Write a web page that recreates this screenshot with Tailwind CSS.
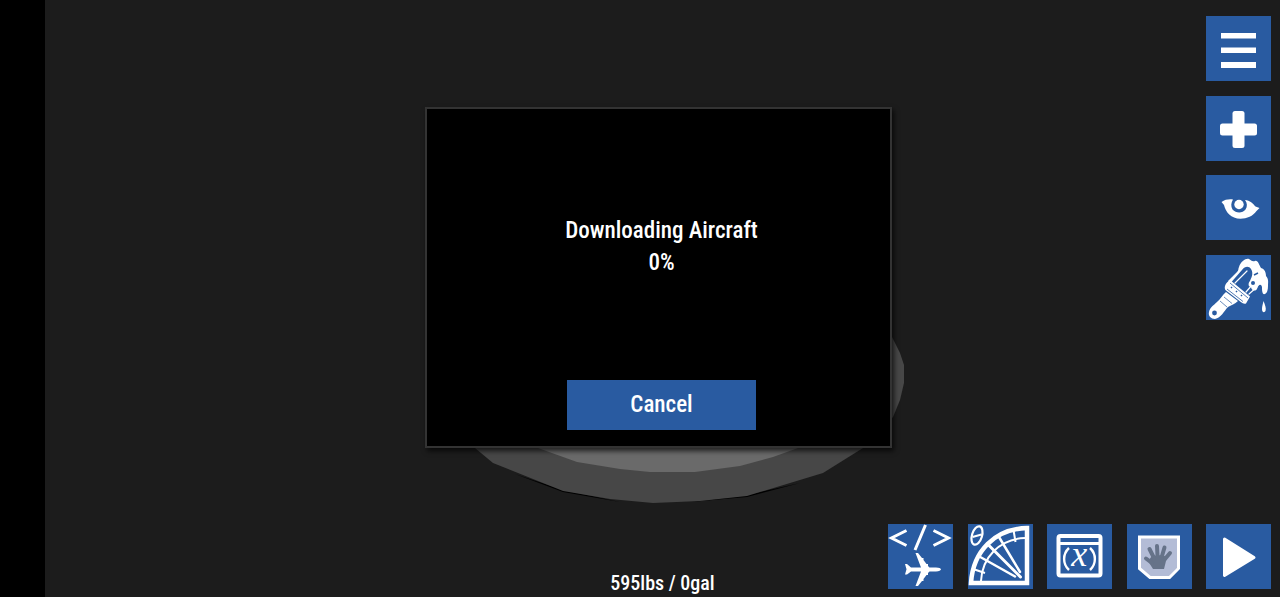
<!DOCTYPE html>
<html lang="en">
<head>
    <meta charset="UTF-8">
    <meta name="viewport" content="width=device-width, initial-scale=1.0">
    <title>Aircraft Designer</title>
    <script src="https://cdn.jsdelivr.net/npm/@tailwindcss/browser@4"></script>
</head>
<body class="flex bg-black min-h-screen overflow-hidden font-['Roboto_Condensed','Roboto',sans-serif] font-medium text-white">
    <main class="relative flex flex-col flex-1 justify-between bg-[#1c1c1c] ml-[45px] pt-4 pb-2">

        <!-- Platform under the aircraft -->
        <svg class="absolute inset-0 w-full h-full" viewBox="45 0 1235 597" preserveAspectRatio="xMidYMin slice" aria-hidden="true">
            <path d="M515 474L563 492L620 502L563 490ZM690 502L747 497L800 483L747 495Z" fill="#000"/>
            <path d="M475 448L493 463L563 491L610 499L653 503L700 501L747 496L823 473L863 448L893 417L900 400L904 383L904 365L900 353L892 337L660 250L475 400Z" fill="#474747"/>
            <path d="M538 448L577 462L620 469L650 472L695 472L740 466L773 457L798 448L798 400L538 400Z" fill="#6a6a6a"/>
        </svg>

        <nav class="relative flex flex-col justify-between self-end mr-[9px] h-[304px]" aria-label="Tools">
            <button type="button" aria-label="Menu" class="bg-[#295ba1] hover:bg-[#3269b5] size-[65px]">
                <svg viewBox="0 0 65 65" fill="#fff">
                    <path d="M15 17h35v5.500H15zM15 31.500h35v5.500H15zM15 46h35v6H15z"/>
                </svg>
            </button>
            <button type="button" aria-label="Add part" class="bg-[#295ba1] hover:bg-[#3269b5] size-[65px]">
                <svg viewBox="0 0 65 65" fill="#fff">
                    <rect x="26.5" y="15" width="12" height="37" rx="2.5"/>
                    <rect x="14" y="27.5" width="37" height="12" rx="2.5"/>
                </svg>
            </button>
            <button type="button" aria-label="View" class="bg-[#295ba1] hover:bg-[#3269b5] size-[65px]">
                <svg viewBox="0 0 65 65" fill="#fff">
                    <path d="M15.500 27C19 24.500 23 24 27 24.500C25 27.500 24.700 31.500 26.500 34.500C30 38.500 36.500 38.500 39.500 34.500C41.500 31.500 41.300 28 39 25C44 25.500 47 28.500 49.500 31.500L53.500 33L50.500 36C47 41 41 43.700 34.500 43.700C25 43.700 19.500 37 18 30Z"/>
                    <circle cx="33" cy="29.500" r="4.700"/>
                </svg>
            </button>
            <button type="button" aria-label="Paint" class="bg-[#295ba1] hover:bg-[#3269b5] size-[65px]">
                <svg viewBox="0 0 65 65" fill="#fff">
                    <!-- wet bristles and drips -->
                    <path d="M33 12C35 6 40 3 43 4C45 5 46 7 49 6C52 5 53 10 55 13C59 14 60 18 60 21C63 24 62 28 62 31C62 35 61 38 59 39C56 40 56 35 56 32C55 28 52 30 51 34C49 37 45 35 45 32C42 32 42 28 44 26C45 23 48 19 45 14C43 11 39 11 36 15L25 27.500L22 26L31 17C33 15 32 14 33 12Z"/>
                    <path d="M57.500 46C59 50 60.500 53 59.500 56C58.500 58 56 57.500 56 54C56 51 57 49 57.500 46Z"/>
                    <path d="M29 28L41 16M40 37L46 30M43 39L51 32" stroke="#fff" stroke-width="1.200" stroke-linecap="round"/>
                    <circle cx="47" cy="28" r="2" fill="#295ba1"/>
                    <path d="M48 20l4-2" stroke="#295ba1" stroke-width="1.500"/>
                    <!-- ferrule -->
                    <path d="M24 25L44 41.500L40 48.500C37 50 34 46 31 44L20 35.500C17 33 20 27 24 25Z"/>
                    <path d="M24 28L42 43M21 34L37 46.500" stroke="#295ba1" stroke-width=".8"/>
                    <path d="M25 32l1 1M30 36l1 1M35 40l1 1" stroke="#295ba1" stroke-width="1.500"/>
                    <!-- handle -->
                    <path d="M20 37L32 46C29 49 25 50 22 52C18 56 15 63 9 64C5 64 2 61 3 57C4 52 8 50 11 47C15 44 16 40 20 37Z"/>
                    <path d="M18 42L26 48.500M14 46L21 52" stroke="#295ba1" stroke-width=".7" fill="none"/>
                    <circle cx="8.500" cy="58" r="2.400" fill="#295ba1"/>
                </svg>
            </button>
        </nav>

        <footer class="relative items-end grid grid-cols-[1fr_auto_1fr] px-[9px]">
            <p class="col-start-2 -mb-1.5 text-xl leading-6">595lbs / 0gal</p>
            <div class="flex justify-between justify-self-end w-[383px]">
                <button type="button" aria-label="Aircraft code" class="bg-[#295ba1] hover:bg-[#3269b5] size-[65px]">
                    <svg viewBox="0 0 65 65" fill="none" stroke="#fff" stroke-width="3">
                        <path d="M18.500 6.500L3.500 14L18.500 21.500M37.500 1L27 26M45.500 6.500L60.500 14L45.500 21.500"/>
                        <path d="M17 40h2l4 3.500h10L27.500 29H30L34 34h1.500v2l3 4h1.500v2l1.500 1.500H48C51 43.500 53 44.500 53 45.200S51 47.500 48 47.500H41.500L40 49v2h-1.500l-3 4v2H34L30 62H27.500L33 47.500H23L19 50.500H17L18.500 45.200Z" fill="#fff" stroke="none"/>
                    </svg>
                </button>
                <button type="button" aria-label="Angle snapping" class="bg-[#295ba1] hover:bg-[#3269b5] size-[65px]">
                    <svg viewBox="0 0 65 65" fill="none" stroke="#fff">
                        <path d="M3 59C5 27 27 5 59 4V59Z" stroke-width="4.500"/>
                        <path d="M13 57C14 34 31 15 57 14" stroke-width="2"/>
                        <path d="M45.500 6L47.500 18M5 45L17 49" stroke-width="2"/>
                        <path d="M31 13L52 48M10.500 32L47 52.500" stroke-width="2.500" stroke-linecap="round"/>
                        <path d="M19.500 20L52.500 53" stroke-width="3" stroke-linecap="round"/>
                        <ellipse cx="9" cy="11.500" rx="5" ry="9.500" transform="rotate(17 9 11.500)" stroke-width="2.200"/>
                        <path d="M4.500 13L13.500 10.500" stroke-width="2"/>
                    </svg>
                </button>
                <button type="button" aria-label="Variables" class="bg-[#295ba1] hover:bg-[#3269b5] size-[65px]">
                    <svg viewBox="0 0 65 65" fill="none" stroke="#fff">
                        <rect x="11.500" y="12" width="42" height="39.500" rx="2" stroke-width="4"/>
                        <path d="M12 19.500H53" stroke-width="3"/>
                        <path d="M22 24C15.500 30 15.500 40 22 46M43 24C49.500 30 49.500 40 43 46" stroke-width="2.400"/>
                        <text x="32.300" y="42" text-anchor="middle" fill="#fff" stroke="none" font-family="Liberation Serif, serif" font-size="36" font-style="italic" font-weight="400">x</text>
                    </svg>
                </button>
                <button type="button" aria-label="Grab" class="bg-[#295ba1] hover:bg-[#3269b5] size-[65px]">
                    <svg viewBox="0 0 65 65">
                        <path d="M12.500 13H51.500V44.500L42.500 53.500H23L12.500 44.500Z" fill="#b3bcd6" stroke="#fff" stroke-width="3"/>
                        <path d="M25 32L35 31L40 33L37 45H26L21 37Z" fill="#667389"/>
                        <path d="M25 39L19 34.500M27 34L22.500 25M30.500 32L30 22M35 32L37.500 23.500M38 35L43 29" fill="none" stroke="#667389" stroke-width="4" stroke-linecap="round"/>
                    </svg>
                </button>
                <button type="button" aria-label="Fly" class="bg-[#295ba1] hover:bg-[#3269b5] size-[65px]">
                    <svg viewBox="0 0 65 65">
                        <path d="M18.500 15L48 33.500L18.500 51.500Z" fill="#fff" stroke="#fff" stroke-width="3" stroke-linejoin="round"/>
                    </svg>
                </button>
            </div>
        </footer>

        <!-- Download dialog -->
        <div class="absolute inset-0 flex justify-center items-start pt-[107px] pr-2">
            <section role="dialog" aria-labelledby="download-title" class="flex flex-col items-center bg-black shadow-[2px_3px_5px_#000000b3] pt-[106px] pb-4 pl-1.5 border-2 border-[#333] w-full max-w-[467px]">
                <h1 id="download-title" class="font-medium text-[23px] leading-8">Downloading Aircraft</h1>
                <p class="text-[23px] leading-8">0%</p>
                <button type="button" class="bg-[#295ba1] hover:bg-[#3269b5] mt-[101px] w-[189px] h-[50px] text-[23px]">Cancel</button>
            </section>
        </div>
    </main>
</body>
</html>
